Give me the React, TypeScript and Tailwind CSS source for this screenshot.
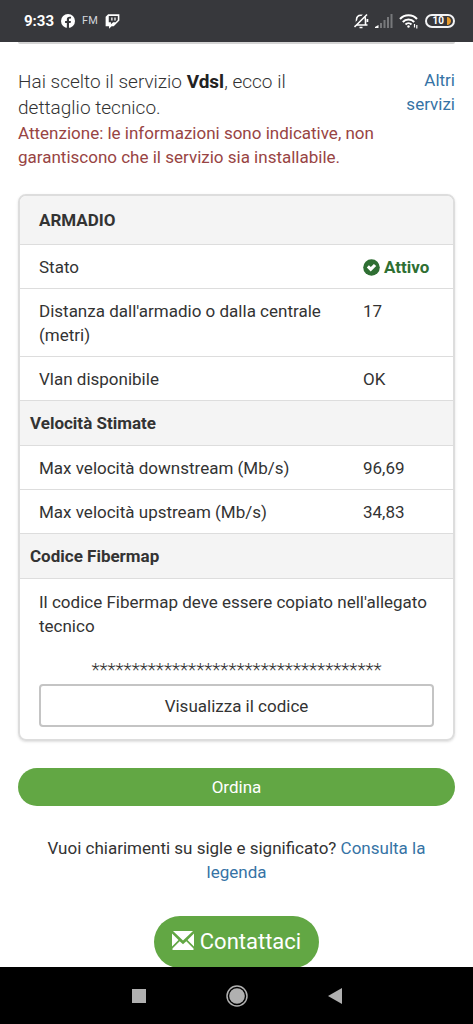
import type { ReactNode } from 'react'

function FacebookIcon() {
  return (
    <svg viewBox="0 0 24 24" className="w-[14px] h-[14px]" aria-hidden="true">
      <circle cx="12" cy="12" r="12" fill="#fff" />
      <path
        d="M10 24v-8.6H7v-3.5h3V9.300c0-3 1.800-4.700 4.500-4.700 1.300 0 2.700.2 2.700.2v3h-1.500c-1.500 0-2 .9-2 1.900v2.200h3.300l-.5 3.500h-2.800V24z"
        fill="#37383c"
      />
    </svg>
  )
}

function TwitchIcon() {
  return (
    <svg viewBox="0 0 24 24" className="w-[15px] h-[15px]" aria-hidden="true">
      <path
        d="M5 .5 1 4.500v15h5.500v4l4-4h3.500l9-9V.5zM20.500 9.500 17 13h-4l-3.500 3.500V13H6V3h14.500z"
        fill="#fff"
      />
      <path d="M11 5.500v5M16 5.500v5" stroke="#fff" strokeWidth="2" fill="none" />
    </svg>
  )
}

function MutedBellIcon() {
  return (
    <svg viewBox="0 0 16 16" className="w-4 h-4" fill="none" stroke="#fff" strokeWidth="1.600" aria-hidden="true">
      <path d="M1 12h13.500M3.500 12V7c0-3 2-4.700 4.500-4.700S12.500 4 12.500 7v5M6.500 14.500h3M14.500 6v3" />
      <path d="M1 12.500 12.500 1" stroke="#37383c" strokeWidth="3" />
      <path d="M1.500 14 14 1.500" />
    </svg>
  )
}

function SignalIcon() {
  return (
    <svg viewBox="0 0 18 14" className="w-[18px] h-[14px]" aria-hidden="true">
      <path d="M0 14v-1l3.500-2v3z" fill="#fff" />
      <path d="M5 9h2v5H5zM8.500 6h2v8h-2zM12 3h2v11h-2zM15.500 0h2v14h-2z" fill="#77787b" />
    </svg>
  )
}

function WifiIcon() {
  return (
    <svg viewBox="0 0 20 16" className="w-5 h-4" fill="none" stroke="#fff" strokeWidth="2" aria-hidden="true">
      <path d="M1 6c4.500-5 12.500-5 17 0M3.800 9c3-3.300 8.400-3.300 11.400 0M6.500 11.500c1.700-1.700 4.300-1.700 6 0" />
      <circle cx="9.500" cy="13.500" r="1.200" fill="#fff" stroke="none" />
      <path d="M15.500 11v3.500M17.800 12v3.500" strokeWidth="1.200" />
    </svg>
  )
}

function BatteryIcon() {
  return (
    <span className="flex h-[14px] w-[30px] items-center justify-end gap-[3px] rounded-full border-2 border-gray-100 pr-0.5">
      <span className="text-[10px] leading-none font-bold">10</span>
      <svg viewBox="0 0 4 8" className="w-1 h-2" aria-hidden="true">
        <path d="M0 0h1c2 1 3 2.500 3 4S3 7 1 8H0z" fill="#e89c2c" />
      </svg>
    </span>
  )
}

function CheckIcon() {
  return (
    <svg viewBox="0 0 17 17" className="w-[17px] h-[17px] shrink-0" aria-hidden="true">
      <circle cx="8.500" cy="8.500" r="8.300" fill="#2f6f33" />
      <path d="M3.800 8.400 5.900 6.300 7.800 7.900 10.900 5l2.300 2.100-5.500 5.300z" fill="#fff" />
    </svg>
  )
}

function EnvelopeIcon() {
  return (
    <svg viewBox="0 0 22 19" className="w-[22px] h-[19px] mb-1" fill="#fff" aria-hidden="true">
      <path d="M1 0h20L11 9.500zM0 2.500 6.500 9 0 15.500zM22 2.500v13L15.500 9zM7.700 10.200 11 13.200l3.300-3L21.500 17.500V19H.5v-1.500z" />
    </svg>
  )
}

function SectionRow({ children }: { children: ReactNode }) {
  return (
    <tr className="border-b border-[#ddd] bg-[#f4f4f4]">
      <th colSpan={2} className="px-[10px] py-[10px] text-left font-bold">{children}</th>
    </tr>
  )
}

function DataRow({ label, children }: { label: string; children: ReactNode }) {
  return (
    <tr className="border-b border-[#ddd] align-top">
      <th scope="row" className="pt-[10px] pb-[9px] pl-[19px] pr-3 text-left font-normal">{label}</th>
      <td className="w-[90px] pt-[10px] pb-[9px]">{children}</td>
    </tr>
  )
}

export default function App() {
  return (
    <div className="flex h-screen flex-col bg-white font-[Roboto,sans-serif] text-[17px] leading-6 text-[#333]">
      <header className="flex h-[42px] shrink-0 items-center justify-between bg-[#37383c] pl-6 pr-[18px] text-white">
        <div className="flex items-center gap-[7px]">
          <span className="text-[15px] font-bold">9:33</span>
          <FacebookIcon />
          <span className="text-[11px] text-gray-300">FM</span>
          <TwitchIcon />
        </div>
        <div className="flex items-center gap-[6px]">
          <MutedBellIcon />
          <SignalIcon />
          <WifiIcon />
          <BatteryIcon />
        </div>
      </header>

      <main className="flex-1 overflow-y-auto px-[18px] [scrollbar-width:none]">
        {/* bottom edge of the card scrolled out above */}
        <div className="h-[2px] rounded-b bg-[#d4d4d4]" />

        <div className="mt-6 flex justify-between">
          <div className="flex-1 pt-px">
            <h1 className="pr-8 text-[19px] leading-[26px] font-light">
              Hai scelto il servizio <strong className="font-bold text-[#222]">Vdsl</strong>, ecco il dettaglio tecnico.
            </h1>
            <p className="text-[#984443]">
              Attenzione: le informazioni sono indicative, non garantiscono che il servizio sia installabile.
            </p>
          </div>
          <a href="#servizi" className="w-20 shrink-0 text-right text-[#3673a5]">Altri servizi</a>
        </div>

        <div className="mt-[25px] overflow-hidden rounded-lg border-2 border-[#ddd] shadow-sm">
          <table className="w-full border-collapse">
            <thead>
              <tr className="border-b border-[#ddd] bg-[#f4f4f4]">
                <th colSpan={2} className="px-[19px] py-3 text-left font-bold">ARMADIO</th>
              </tr>
            </thead>
            <tbody>
              <DataRow label="Stato">
                <span className="flex items-center gap-1 font-bold text-[#2f6f33]">
                  <CheckIcon />
                  Attivo
                </span>
              </DataRow>
              <DataRow label="Distanza dall'armadio o dalla centrale (metri)">17</DataRow>
              <DataRow label="Vlan disponibile">OK</DataRow>
              <SectionRow>Velocità Stimate</SectionRow>
              <DataRow label="Max velocità downstream (Mb/s)">96,69</DataRow>
              <DataRow label="Max velocità upstream (Mb/s)">34,83</DataRow>
              <SectionRow>Codice Fibermap</SectionRow>
              <tr>
                <td colSpan={2} className="px-[19px] pt-[11px] pb-3">
                  <p>Il codice Fibermap deve essere copiato nell'allegato tecnico</p>
                  <p className="mt-5 text-center text-[19px] font-light">************************************</p>
                  <button className="mt-[2px] h-[43px] w-full rounded border-2 border-[#c4c4c4] bg-white">
                    Visualizza il codice
                  </button>
                </td>
              </tr>
            </tbody>
          </table>
        </div>

        <button className="mt-[27px] h-[38px] w-full rounded-full bg-[#62a744] text-white">Ordina</button>

        <p className="mt-[30px] px-6 text-center">
          Vuoi chiarimenti su sigle e significato? <a href="#legenda" className="text-[#3673a5]">Consulta la legenda</a>
        </p>

        <div className="mt-8 flex justify-center">
          <button className="flex h-[52px] shrink-0 items-center gap-[6px] rounded-full bg-[#62a744] px-[18px] text-[22px] text-white">
            <EnvelopeIcon />
            Contattaci
          </button>
        </div>
      </main>

      <nav className="flex h-[57px] shrink-0 items-center justify-center gap-20 bg-black">
        <button aria-label="Recenti">
          <svg viewBox="0 0 14 14" className="w-[14px] h-[14px]"><path d="M0 0h14v14H0z" fill="#b0b0b0" /></svg>
        </button>
        <button aria-label="Home">
          <svg viewBox="0 0 22 22" className="w-[22px] h-[22px]">
            <circle cx="11" cy="11" r="10" fill="none" stroke="#b0b0b0" strokeWidth="1.500" />
            <circle cx="11" cy="11" r="7.800" fill="#b0b0b0" />
          </svg>
        </button>
        <button aria-label="Indietro">
          <svg viewBox="0 0 14 16" className="w-[14px] h-4"><path d="M0 8 14 0v16z" fill="#b0b0b0" /></svg>
        </button>
      </nav>
    </div>
  )
}
